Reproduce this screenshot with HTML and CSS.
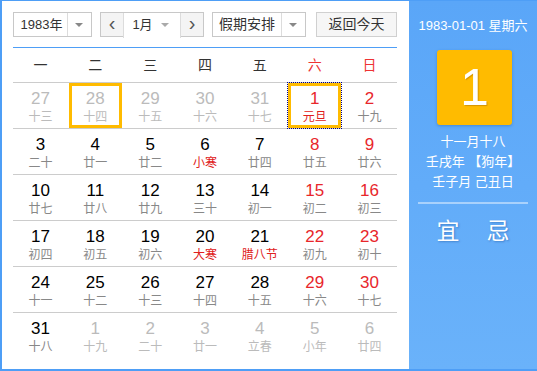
FILE: index.html
```html
<!DOCTYPE html>
<html lang="zh-CN">
<head>
	<meta charset="UTF-8">
	<title>万年历</title>
	<link rel="stylesheet" href="styles.css">
</head>
<body>
	<div class="calendar">
		<div class="main">
			<!-- 顶部工具条 -->
			<div class="toolbar">
				<div class="select year"><span class="val">1983年</span><span class="arrow"></span></div>
				<div class="month-group">
					<span class="step">&lsaquo;</span>
					<div class="select month"><span class="val">1月</span><span class="arrow"></span></div>
					<span class="step">&rsaquo;</span>
				</div>
				<div class="select holiday"><span class="val">假期安排</span><span class="arrow"></span></div>
				<button class="today-btn">返回今天</button>
			</div>

			<div class="week-head">
				<span>一</span><span>二</span><span>三</span><span>四</span><span>五</span>
				<span class="weekend">六</span><span class="weekend">日</span>
			</div>

			<div class="weeks">
				<div class="week">
					<div class="day other"><b>27</b><i>十三</i></div>
					<div class="day other selected"><b>28</b><i>十四</i></div>
					<div class="day other"><b>29</b><i>十五</i></div>
					<div class="day other"><b>30</b><i>十六</i></div>
					<div class="day other"><b>31</b><i>十七</i></div>
					<div class="day weekend today"><b>1</b><i class="fest">元旦</i></div>
					<div class="day weekend"><b>2</b><i>十九</i></div>
				</div>
				<div class="week">
					<div class="day"><b>3</b><i>二十</i></div>
					<div class="day"><b>4</b><i>廿一</i></div>
					<div class="day"><b>5</b><i>廿二</i></div>
					<div class="day"><b>6</b><i class="fest">小寒</i></div>
					<div class="day"><b>7</b><i>廿四</i></div>
					<div class="day weekend"><b>8</b><i>廿五</i></div>
					<div class="day weekend"><b>9</b><i>廿六</i></div>
				</div>
				<div class="week">
					<div class="day"><b>10</b><i>廿七</i></div>
					<div class="day"><b>11</b><i>廿八</i></div>
					<div class="day"><b>12</b><i>廿九</i></div>
					<div class="day"><b>13</b><i>三十</i></div>
					<div class="day"><b>14</b><i>初一</i></div>
					<div class="day weekend"><b>15</b><i>初二</i></div>
					<div class="day weekend"><b>16</b><i>初三</i></div>
				</div>
				<div class="week">
					<div class="day"><b>17</b><i>初四</i></div>
					<div class="day"><b>18</b><i>初五</i></div>
					<div class="day"><b>19</b><i>初六</i></div>
					<div class="day"><b>20</b><i class="fest">大寒</i></div>
					<div class="day"><b>21</b><i class="fest">腊八节</i></div>
					<div class="day weekend"><b>22</b><i>初九</i></div>
					<div class="day weekend"><b>23</b><i>初十</i></div>
				</div>
				<div class="week">
					<div class="day"><b>24</b><i>十一</i></div>
					<div class="day"><b>25</b><i>十二</i></div>
					<div class="day"><b>26</b><i>十三</i></div>
					<div class="day"><b>27</b><i>十四</i></div>
					<div class="day"><b>28</b><i>十五</i></div>
					<div class="day weekend"><b>29</b><i>十六</i></div>
					<div class="day weekend"><b>30</b><i>十七</i></div>
				</div>
				<div class="week">
					<div class="day"><b>31</b><i>十八</i></div>
					<div class="day other"><b>1</b><i>十九</i></div>
					<div class="day other"><b>2</b><i>二十</i></div>
					<div class="day other"><b>3</b><i>廿一</i></div>
					<div class="day other"><b>4</b><i>立春</i></div>
					<div class="day other"><b>5</b><i>小年</i></div>
					<div class="day other"><b>6</b><i>廿四</i></div>
				</div>
			</div>
		</div>

		<!-- 右侧当日详情 -->
		<div class="side">
			<div class="side-date">1983-01-01 星期六</div>
			<div class="side-day">1</div>
			<div class="side-lunar">
				<p>十一月十八</p>
				<p>壬戌年 【狗年】</p>
				<p>壬子月 己丑日</p>
			</div>
			<div class="side-yiji"><span>宜</span><span>忌</span></div>
		</div>
	</div>
</body>
</html>
```

FILE: styles.css
```css
* {
	margin: 0;
	padding: 0;
	box-sizing: border-box;
}
body {
	font: normal 13px/1.5 "Liberation Sans", "Noto Sans CJK SC", Arial, sans-serif;
	background: #fff;
	color: #333;
}
.calendar {
	display: flex;
	width: 537px;
	height: 371px;
	border: 2px solid #4e9ef6;
	border-top-width: 1px;
	border-right: 0;
	background: #fff;
}
.main {
	width: 407px;
	padding: 11px 12px 0 11px;
}

/* 工具条 */
.toolbar {
	display: flex;
	height: 25px;
	padding-bottom: 10px;
	box-sizing: content-box;
	border-bottom: 1px solid #4e9ef6;
}
.select {
	display: flex;
	height: 25px;
	border: 1px solid #c8c8c8;
	background: #fff;
	color: #333;
}
.select .val {
	flex: 1;
	line-height: 23px;
	text-align: center;
	border-right: 1px solid #dcdcdc;
}
.select .arrow {
	position: relative;
	width: 23px;
}
.select .arrow:after {
	content: "";
	position: absolute;
	top: 10px;
	left: 7px;
	border-left: 4px solid transparent;
	border-right: 4px solid transparent;
	border-top: 4px solid #888;
}
.year {
	width: 79px;
}
.year .val {
	padding-left: 2px;
}
.month-group {
	display: flex;
	width: 104px;
	height: 25px;
	margin-left: 8px;
	border: 1px solid #c8c8c8;
}
.month-group .step {
	width: 22px;
	line-height: 21px;
	text-align: center;
	font-size: 20px;
	color: #555;
	background: #f4f4f4;
}
.month {
	flex: 1;
	border-width: 0 1px;
	border-color: #dcdcdc;
}
.month .val {
	border-right: 0;
	padding-left: 4px;
}
.month .arrow:after {
	left: 4px;
	border-top-color: #aaa;
}
.holiday {
	width: 94px;
	margin-left: 8px;
}
.holiday .val {
	font-size: 14px;
}
.today-btn {
	width: 81px;
	height: 25px;
	margin-left: 10px;
	border: 1px solid #d0d0d0;
	background: #f6f6f6;
	font: 14px/23px "Liberation Sans", "Noto Sans CJK SC", sans-serif;
	color: #333;
}

/* 星期表头 */
.week-head {
	display: grid;
	grid-template-columns: repeat(7, 1fr);
	height: 35px;
	border-bottom: 1px solid #ccc;
	font-size: 14px;
	line-height: 34px;
	text-align: center;
	color: #333;
}
.week-head .weekend {
	color: #e33;
}

/* 日期 */
.week {
	display: grid;
	grid-template-columns: repeat(7, 1fr);
	height: 46px;
	border-bottom: 1px solid #ccc;
}
.week:last-child {
	border-bottom: 0;
}
.day {
	display: flex;
	flex-direction: column;
	align-items: center;
	padding-top: 5px;
	margin: 0 1px;
}
.day b {
	font-size: 17px;
	font-weight: normal;
	line-height: 22px;
	color: #000;
}
.day i {
	font-size: 12px;
	font-style: normal;
	line-height: 14px;
	color: #888;
}
.day i.fest {
	color: #e02020;
}
.day.weekend b {
	color: #e8262b;
}
.day.other b,
.day.other i {
	color: #bbb;
}
.day.selected,
.day.today {
	border: 3px solid #ffbb00;
	padding-top: 2px;
	height: 45px;
}
.day.today {
	outline: 1px dotted #00008b;
}
.day.today b {
	color: #e8262b;
}

/* 右侧 */
.side {
	flex: 1;
	display: flex;
	flex-direction: column;
	align-items: center;
	background: linear-gradient(to bottom, #5aa6f8 0%, #6ab2fa 100%);
	color: #fff;
}
.side-date {
	margin-top: 15px;
	font-size: 13px;
	line-height: 20px;
}
.side-day {
	width: 75px;
	height: 75px;
	margin-top: 14px;
	margin-left: 3px;
	background: #ffbb00;
	border-radius: 3px;
	box-shadow: 0 1px 3px rgba(0, 60, 140, .3);
	font-size: 52px;
	line-height: 75px;
	text-align: center;
	text-shadow: 1px 1px 1px rgba(150, 90, 0, .4);
}
.side-lunar {
	margin-top: 7px;
	font-size: 13px;
	line-height: 20px;
	text-align: center;
	width: 110px;
	padding-bottom: 10px;
	border-bottom: 2px solid rgba(255, 255, 255, .45);
}
.side-yiji {
	display: flex;
	gap: 27px;
	margin-top: 12px;
	font-size: 23px;
	line-height: 30px;
	text-shadow: 1px 1px 2px rgba(0, 50, 120, .35);
}
```
